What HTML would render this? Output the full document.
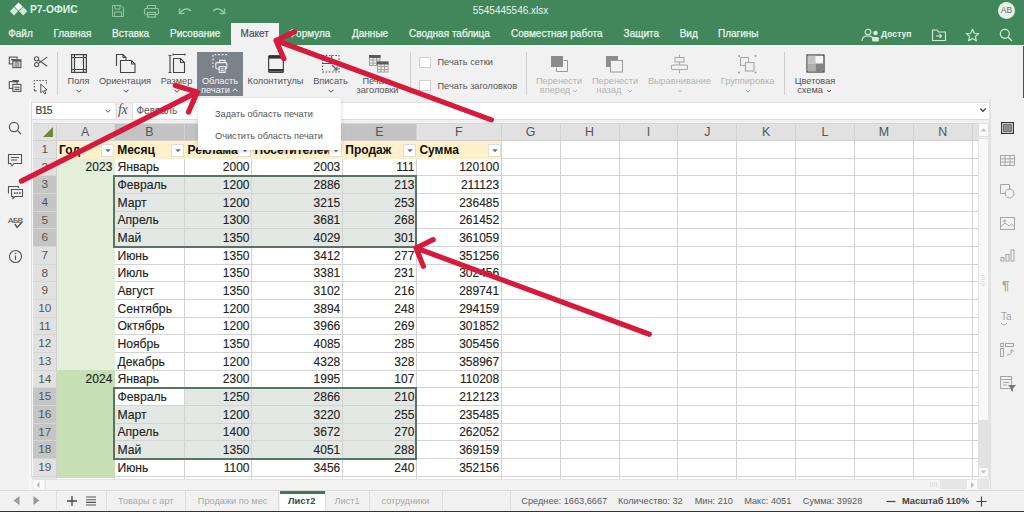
<!DOCTYPE html>
<html><head><meta charset="utf-8"><style>
html,body{margin:0;padding:0;width:1024px;height:512px;overflow:hidden;background:#f1f1f1}
body{position:relative;font-family:'Liberation Sans',sans-serif;}
div,svg{box-sizing:content-box}
</style></head><body>
<div style="position:absolute;left:0px;top:0px;width:1024px;height:45px;background:#41875b"></div><svg style="position:absolute;left:8px;top:0px;" width="22" height="18" viewBox="0 0 22 18"><g fill="#cfe9d4"><path d="M6 7.1 L10.2 11.3 L6 15.5 L1.8 11.3Z"/><path d="M15.2 7.1 L19.4 11.3 L15.2 15.5 L11 11.3Z"/></g><path d="M10.6 2.4 L14.8 6.6 L10.6 10.8 L6.4 6.6Z" fill="#f0fbf2"/></svg><div style="position:absolute;left:30px;top:-0.3000000000000007px;height:20.6px;line-height:20.6px;font-size:10.3px;color:#dff5e3;white-space:nowrap;font-weight:bold">Р7-ОФИС</div><svg style="position:absolute;left:110px;top:3px;" width="16" height="16" viewBox="0 0 16 16"><g fill="none" stroke="#8fc5a0" stroke-width="1"><path d="M2.5 2.5 H11 L13.5 5 V13.5 H2.5Z"/><path d="M5 2.5 V6 H10 V2.5"/><path d="M4.5 13.5 V9 H11.5 V13.5"/></g></svg><svg style="position:absolute;left:143px;top:3px;" width="17" height="16" viewBox="0 0 17 16"><g fill="none" stroke="#8fc5a0" stroke-width="1.2"><path d="M4.5 5.5 V2.5 H12.5 V5.5"/><rect x="1.5" y="5.5" width="14" height="6" rx="1.5"/><rect x="4.5" y="9.5" width="8" height="4.5"/></g></svg><svg style="position:absolute;left:177px;top:5px;" width="17" height="12" viewBox="0 0 17 12"><g fill="none" stroke="#8fc5a0" stroke-width="1.6"><path d="M3 8 Q8 1 14 6"/><path d="M2.5 3.5 V8.5 H7.5"/></g></svg><svg style="position:absolute;left:210px;top:5px;" width="17" height="12" viewBox="0 0 17 12"><g fill="none" stroke="#8fc5a0" stroke-width="1.6"><path d="M14 8 Q9 1 3 6"/><path d="M14.5 3.5 V8.5 H9.5"/></g></svg><div style="position:absolute;left:410.5px;width:200px;text-align:center;top:0.5px;height:20px;line-height:20px;font-size:10px;color:#eaf6ec;white-space:nowrap;">5545445546.xlsx</div><div style="position:absolute;left:998px;top:2px;width:17px;height:17px;border-radius:50%;background:#e6efe8;color:#6a6a6a;font-size:8.5px;line-height:17px;text-align:center">AB</div><div style="position:absolute;left:230.6px;top:22.8px;width:48.8px;height:22.5px;background:#f1f1f1"></div><div style="position:absolute;left:8.2px;top:23.6px;height:20px;line-height:20px;font-size:10px;color:#e8f4ea;white-space:nowrap;-webkit-text-stroke:0.25px #e8f4ea">Файл</div><div style="position:absolute;left:53.4px;top:23.6px;height:20px;line-height:20px;font-size:10px;color:#e8f4ea;white-space:nowrap;-webkit-text-stroke:0.25px #e8f4ea">Главная</div><div style="position:absolute;left:112px;top:23.6px;height:20px;line-height:20px;font-size:10px;color:#e8f4ea;white-space:nowrap;-webkit-text-stroke:0.25px #e8f4ea">Вставка</div><div style="position:absolute;left:170px;top:23.6px;height:20px;line-height:20px;font-size:10px;color:#e8f4ea;white-space:nowrap;-webkit-text-stroke:0.25px #e8f4ea">Рисование</div><div style="position:absolute;left:288.5px;top:23.6px;height:20px;line-height:20px;font-size:10px;color:#e8f4ea;white-space:nowrap;-webkit-text-stroke:0.25px #e8f4ea">Формула</div><div style="position:absolute;left:352px;top:23.6px;height:20px;line-height:20px;font-size:10px;color:#e8f4ea;white-space:nowrap;-webkit-text-stroke:0.25px #e8f4ea">Данные</div><div style="position:absolute;left:409px;top:23.6px;height:20px;line-height:20px;font-size:10px;color:#e8f4ea;white-space:nowrap;-webkit-text-stroke:0.25px #e8f4ea">Сводная таблица</div><div style="position:absolute;left:511px;top:23.6px;height:20px;line-height:20px;font-size:10px;color:#e8f4ea;white-space:nowrap;-webkit-text-stroke:0.25px #e8f4ea">Совместная работа</div><div style="position:absolute;left:623.6px;top:23.6px;height:20px;line-height:20px;font-size:10px;color:#e8f4ea;white-space:nowrap;-webkit-text-stroke:0.25px #e8f4ea">Защита</div><div style="position:absolute;left:679.7px;top:23.6px;height:20px;line-height:20px;font-size:10px;color:#e8f4ea;white-space:nowrap;-webkit-text-stroke:0.25px #e8f4ea">Вид</div><div style="position:absolute;left:718px;top:23.6px;height:20px;line-height:20px;font-size:10px;color:#e8f4ea;white-space:nowrap;-webkit-text-stroke:0.25px #e8f4ea">Плагины</div><div style="position:absolute;left:240.5px;top:23.6px;height:20px;line-height:20px;font-size:10px;color:#4a4a4a;white-space:nowrap;-webkit-text-stroke:0.15px #4a4a4a">Макет</div><svg style="position:absolute;left:861px;top:28px;" width="19" height="14" viewBox="0 0 19 14"><g fill="none" stroke="#d5ecd9" stroke-width="1.1"><circle cx="7" cy="4" r="2.8"/><path d="M1 13 Q1 8 7 8 Q11 8 12 10"/></g><circle cx="14.5" cy="5" r="2.3" fill="#d5ecd9"/><rect x="11" y="9" width="7" height="4.5" rx="1.5" fill="#d5ecd9"/></svg><div style="position:absolute;left:881px;top:26.4px;height:17.2px;line-height:17.2px;font-size:8.6px;color:#e6f4e9;white-space:nowrap;font-weight:bold">Доступ</div><svg style="position:absolute;left:931px;top:28px;" width="16" height="14" viewBox="0 0 16 14"><g fill="none" stroke="#d5ecd9" stroke-width="1.1"><path d="M1.5 2 H6 L7.5 4 H14.5 V12.5 H1.5Z"/><path d="M5 8 H10.5 M8.5 6 L10.5 8 L8.5 10"/></g></svg><svg style="position:absolute;left:965px;top:28px;" width="15" height="14" viewBox="0 0 15 14"><path d="M7.5 1.2 L9.3 5.2 L13.7 5.5 L10.4 8.4 L11.4 12.8 L7.5 10.5 L3.6 12.8 L4.6 8.4 L1.3 5.5 L5.7 5.2Z" fill="none" stroke="#d5ecd9" stroke-width="1.1" stroke-linejoin="round"/></svg><svg style="position:absolute;left:999px;top:28px;" width="14" height="14" viewBox="0 0 14 14"><g fill="none" stroke="#d5ecd9" stroke-width="1.2"><circle cx="5.8" cy="5.8" r="4.5"/><path d="M9 9 L13 13"/></g></svg><div style="position:absolute;left:0px;top:45px;width:1024px;height:53px;background:#f1f1f1"></div><div style="position:absolute;left:1023px;top:46px;width:1px;height:466px;background:#505050"></div><svg style="position:absolute;left:8px;top:55px;" width="16" height="16" viewBox="0 0 16 16"><g fill="none" stroke="#555" stroke-width="1.1"><rect x="1.3" y="2.1" width="7.8" height="6.8"/><path d="M3 4.5 H7.5"/><rect x="4.9" y="4.9" width="8" height="7.7" fill="#f1f1f1"/><path d="M6.5 7 H11.5 M6.5 9 H11.5 M6.5 11 H11.5"/></g><rect x="4.9" y="4.9" width="8" height="1.6" fill="#555"/></svg><svg style="position:absolute;left:8px;top:79px;" width="16" height="16" viewBox="0 0 16 16"><g fill="none" stroke="#555" stroke-width="1.1"><rect x="1.3" y="2.6" width="7.8" height="6.8"/><rect x="4.9" y="5.4" width="8" height="7" fill="#f1f1f1"/><path d="M6.5 8.2 H11.5 M6.5 10.4 H11.5"/></g><rect x="4" y="1" width="7" height="2.2" rx="1" fill="#555"/></svg><svg style="position:absolute;left:33px;top:55px;" width="16" height="14" viewBox="0 0 16 14"><g fill="none" stroke="#555" stroke-width="1.1"><circle cx="3.6" cy="3.8" r="2.1"/><circle cx="3.6" cy="9.6" r="2.1"/><path d="M5.4 5 L14.2 11.3 M5.4 8.4 L14.2 2.1"/></g></svg><svg style="position:absolute;left:33px;top:79px;" width="16" height="16" viewBox="0 0 16 16"><g fill="none" stroke="#555" stroke-width="1.1" stroke-dasharray="1.5 1.5"><path d="M1.3 11.5 V1.5 H13.5 V4.5"/></g><path d="M1 11.8 H3.5" stroke="#555" stroke-width="1.1"/><path d="M7.8 5 V13.8 L9.8 12 L11.6 14.9 L13 14.1 L11.3 11.3 L14 11Z" fill="#f1f1f1" stroke="#555" stroke-width="1" stroke-linejoin="round"/></svg><div style="position:absolute;left:57px;top:52px;width:1px;height:43px;background:#d0d0d0"></div><svg style="position:absolute;left:70px;top:53px;" width="18" height="21" viewBox="0 0 18 21"><g fill="none" stroke="#444" stroke-width="1.2"><rect x="1.6" y="1.6" width="14.8" height="17.8"/><path d="M4.5 1.6 V19.4 M13.5 1.6 V19.4 M1.6 4.5 H16.4 M1.6 16.5 H16.4"/></g></svg><div style="position:absolute;left:-21.5px;width:200px;text-align:center;top:72.3px;height:18.4px;line-height:18.4px;font-size:9.2px;color:#535353;white-space:nowrap;">Поля</div><svg style="position:absolute;left:75px;top:87.5px;" width="8" height="6" viewBox="0 0 8 6"><path d="M1.5 1.75 L4 4.25 L6.5 1.75" fill="none" stroke="#535353" stroke-width="1"/></svg><svg style="position:absolute;left:115px;top:53px;" width="22" height="21" viewBox="0 0 22 21"><g fill="none" stroke="#444" stroke-width="1.1"><path d="M1.5 13 V1.5 H8 L11 4.5 V7"/><path d="M8 1.5 V4.5 H11"/><path d="M5.5 7.5 H16.5 L20 11 V19.5 H5.5Z" fill="#f1f1f1"/><path d="M16.5 7.5 V11 H20"/></g></svg><div style="position:absolute;left:25px;width:200px;text-align:center;top:72.3px;height:18.4px;line-height:18.4px;font-size:9.2px;color:#535353;white-space:nowrap;">Ориентация</div><svg style="position:absolute;left:122px;top:87.5px;" width="8" height="6" viewBox="0 0 8 6"><path d="M1.5 1.75 L4 4.25 L6.5 1.75" fill="none" stroke="#535353" stroke-width="1"/></svg><svg style="position:absolute;left:168px;top:53px;" width="18" height="21" viewBox="0 0 18 21"><g fill="none" stroke="#444" stroke-width="1.1"><path d="M2 2.5 V19.5 M0.5 2.5 H3.5 M0.5 19.5 H3.5"/><path d="M5 1.5 H17 M5 0.5 V2.5 M17 0.5 V2.5"/><path d="M5.5 5.5 H12.5 L16.5 9.5 V19.5 H5.5Z"/><path d="M12.5 5.5 V9.5 H16.5"/></g></svg><div style="position:absolute;left:76.5px;width:200px;text-align:center;top:72.3px;height:18.4px;line-height:18.4px;font-size:9.2px;color:#535353;white-space:nowrap;">Размер</div><svg style="position:absolute;left:173px;top:87.5px;" width="8" height="6" viewBox="0 0 8 6"><path d="M1.5 1.75 L4 4.25 L6.5 1.75" fill="none" stroke="#535353" stroke-width="1"/></svg><div style="position:absolute;left:197px;top:52px;width:46px;height:43.5px;background:#7b8289"></div><svg style="position:absolute;left:211px;top:53px;" width="18" height="22" viewBox="0 0 18 22"><g fill="none" stroke="#eef0f2" stroke-width="1.1"><path d="M2 2 V16.5" stroke-dasharray="1.8 1.8"/><path d="M3.5 1.6 H15.5 V4" stroke-dasharray="1.8 1.8"/><path d="M8.6 9.6 V7.4 H14 V9.6"/><rect x="4.8" y="9.6" width="11" height="6.2" rx="1.2" fill="#7b8289"/><rect x="8.2" y="13.6" width="6" height="5.8" fill="#7b8289"/><path d="M9.6 15.8 H12.8 M9.6 17.6 H12.8"/></g></svg><div style="position:absolute;left:120px;width:200px;text-align:center;top:72.3px;height:18.4px;line-height:18.4px;font-size:9.2px;color:#f3f4f5;white-space:nowrap;">Область</div><div style="position:absolute;left:115.5px;width:200px;text-align:center;top:81.1px;height:18.4px;line-height:18.4px;font-size:9.2px;color:#f3f4f5;white-space:nowrap;">печати</div><svg style="position:absolute;left:231px;top:87px;" width="8" height="6" viewBox="0 0 8 6"><path d="M1.5 4.25 L4 1.75 L6.5 4.25" fill="none" stroke="#f3f4f5" stroke-width="1"/></svg><svg style="position:absolute;left:267px;top:54px;" width="18" height="20" viewBox="0 0 18 20"><g fill="none" stroke="#444" stroke-width="1.2"><rect x="1.6" y="1.6" width="14.8" height="16.8" rx="1"/></g><rect x="2" y="2" width="14" height="2.6" fill="#333"/><rect x="2" y="15" width="14" height="2.6" fill="#333"/></svg><div style="position:absolute;left:175.5px;width:200px;text-align:center;top:72.3px;height:18.4px;line-height:18.4px;font-size:9.2px;color:#535353;white-space:nowrap;">Колонтитулы</div><svg style="position:absolute;left:321px;top:54px;" width="20" height="20" viewBox="0 0 20 20"><g fill="none" stroke="#555" stroke-width="1.1"><rect x="1.5" y="1.5" width="16.5" height="16.5" stroke-dasharray="1.6 1.6"/><path d="M1.5 9.5 H10.5 V1.5"/><path d="M11 11 L16 16 M16 12.5 V16 H12.5"/></g></svg><div style="position:absolute;left:230.5px;width:200px;text-align:center;top:72.3px;height:18.4px;line-height:18.4px;font-size:9.2px;color:#535353;white-space:nowrap;">Вписать</div><svg style="position:absolute;left:326.5px;top:87.5px;" width="8" height="6" viewBox="0 0 8 6"><path d="M1.5 1.75 L4 4.25 L6.5 1.75" fill="none" stroke="#535353" stroke-width="1"/></svg><svg style="position:absolute;left:368px;top:54px;" width="22" height="20" viewBox="0 0 22 20"><g fill="none" stroke="#a0a0a0" stroke-width="1"><rect x="1.5" y="1.5" width="10.5" height="10"/><path d="M1.5 6 H12 M1.5 9 H12 M5 3.5 V11.5 M8.5 3.5 V11.5"/></g><rect x="1" y="1" width="11.5" height="3" fill="#5a5a5a"/><rect x="9" y="7.5" width="11.5" height="11" fill="#f1f1f1"/><g fill="none" stroke="#a0a0a0" stroke-width="1"><rect x="9.5" y="8" width="10.5" height="10"/><path d="M9.5 12.5 H20 M9.5 15.5 H20 M13 10 V18 M16.5 10 V18"/></g><rect x="9" y="7.5" width="11.5" height="3" fill="#5a5a5a"/></svg><div style="position:absolute;left:277.5px;width:200px;text-align:center;top:72.3px;height:18.4px;line-height:18.4px;font-size:9.2px;color:#535353;white-space:nowrap;">Печать</div><div style="position:absolute;left:277.5px;width:200px;text-align:center;top:81.3px;height:18.4px;line-height:18.4px;font-size:9.2px;color:#535353;white-space:nowrap;">заголовки</div><div style="position:absolute;left:410px;top:52px;width:1px;height:43px;background:#d0d0d0"></div><div style="position:absolute;left:419px;top:56.5px;width:11.5px;height:11px;background:#fff;border:1px solid #d0d0d0;box-sizing:border-box"></div><div style="position:absolute;left:419px;top:80px;width:11.5px;height:11px;background:#fff;border:1px solid #d0d0d0;box-sizing:border-box"></div><div style="position:absolute;left:437.5px;top:53.2px;height:18.4px;line-height:18.4px;font-size:9.2px;color:#535353;white-space:nowrap;">Печать сетки</div><div style="position:absolute;left:437.5px;top:76.7px;height:18.4px;line-height:18.4px;font-size:9.2px;color:#535353;white-space:nowrap;">Печать заголовков</div><div style="position:absolute;left:526px;top:52px;width:1px;height:43px;background:#d0d0d0"></div><svg style="position:absolute;left:550px;top:55px;" width="19" height="18" viewBox="0 0 19 18"><rect x="1" y="1" width="12" height="11" fill="#8c8c8c"/><path d="M13.5 5.5 H17.5 V16.5 H6.5 V12.5" fill="none" stroke="#9a9a9a" stroke-width="1"/></svg><div style="position:absolute;left:459px;width:200px;text-align:center;top:72.3px;height:18.4px;line-height:18.4px;font-size:9.2px;color:#b4b4b4;white-space:nowrap;">Перенести</div><div style="position:absolute;left:455px;width:200px;text-align:center;top:81.3px;height:18.4px;line-height:18.4px;font-size:9.2px;color:#b4b4b4;white-space:nowrap;">вперед</div><svg style="position:absolute;left:571px;top:87.8px;" width="8" height="6" viewBox="0 0 8 6"><path d="M2 2.0 L4 4.0 L6 2.0" fill="none" stroke="#b4b4b4" stroke-width="1"/></svg><svg style="position:absolute;left:605px;top:55px;" width="19" height="18" viewBox="0 0 19 18"><rect x="1" y="1" width="12" height="11" fill="#8c8c8c"/><rect x="5.5" y="5.5" width="12" height="11.5" fill="#f1f1f1" stroke="#9a9a9a" stroke-width="1"/></svg><div style="position:absolute;left:515px;width:200px;text-align:center;top:72.3px;height:18.4px;line-height:18.4px;font-size:9.2px;color:#b4b4b4;white-space:nowrap;">Перенести</div><div style="position:absolute;left:509px;width:200px;text-align:center;top:81.3px;height:18.4px;line-height:18.4px;font-size:9.2px;color:#b4b4b4;white-space:nowrap;">назад</div><svg style="position:absolute;left:626px;top:87.8px;" width="8" height="6" viewBox="0 0 8 6"><path d="M2 2.0 L4 4.0 L6 2.0" fill="none" stroke="#b4b4b4" stroke-width="1"/></svg><svg style="position:absolute;left:670px;top:54px;" width="19" height="20" viewBox="0 0 19 20"><g fill="none" stroke="#a8a8a8" stroke-width="1.1"><path d="M9.5 0.5 V19.5"/><rect x="5" y="3.5" width="9" height="4.5" fill="#f1f1f1"/><rect x="1.5" y="11" width="16" height="4.5" rx="1" fill="#f1f1f1"/></g></svg><div style="position:absolute;left:579.5px;width:200px;text-align:center;top:72.3px;height:18.4px;line-height:18.4px;font-size:9.2px;color:#b4b4b4;white-space:nowrap;">Выравнивание</div><svg style="position:absolute;left:676px;top:87.8px;" width="8" height="6" viewBox="0 0 8 6"><path d="M2 2.0 L4 4.0 L6 2.0" fill="none" stroke="#b4b4b4" stroke-width="1"/></svg><svg style="position:absolute;left:737px;top:54px;" width="21" height="20" viewBox="0 0 21 20"><g fill="none" stroke="#a8a8a8" stroke-width="1.1"><rect x="3.5" y="3.5" width="8" height="8"/><rect x="8.5" y="8.5" width="8.5" height="8.5" fill="#f1f1f1"/></g><g fill="#999"><circle cx="2" cy="2" r="1"/><circle cx="18.5" cy="2" r="1"/><circle cx="2" cy="18.5" r="1"/><circle cx="18.5" cy="18.5" r="1"/></g></svg><div style="position:absolute;left:647.5px;width:200px;text-align:center;top:72.3px;height:18.4px;line-height:18.4px;font-size:9.2px;color:#b4b4b4;white-space:nowrap;">Группировка</div><svg style="position:absolute;left:744px;top:87.8px;" width="8" height="6" viewBox="0 0 8 6"><path d="M2 2.0 L4 4.0 L6 2.0" fill="none" stroke="#b4b4b4" stroke-width="1"/></svg><div style="position:absolute;left:784px;top:52px;width:1px;height:43px;background:#d0d0d0"></div><svg style="position:absolute;left:806px;top:54px;" width="19" height="19" viewBox="0 0 19 19"><rect x="1" y="1" width="17" height="17" fill="#f6f6f6" stroke="#4a4a4a" stroke-width="1.3"/><rect x="1.7" y="1.7" width="7.8" height="7.8" fill="#c4c4c4"/><rect x="1.7" y="9.5" width="7.8" height="7.8" fill="#b0b0b0"/><rect x="9.5" y="9.5" width="7.8" height="7.8" fill="#858585"/></svg><div style="position:absolute;left:715px;width:200px;text-align:center;top:72.3px;height:18.4px;line-height:18.4px;font-size:9.2px;color:#535353;white-space:nowrap;">Цветовая</div><div style="position:absolute;left:710px;width:200px;text-align:center;top:81.3px;height:18.4px;line-height:18.4px;font-size:9.2px;color:#535353;white-space:nowrap;">схема</div><svg style="position:absolute;left:824.5px;top:87.8px;" width="8" height="6" viewBox="0 0 8 6"><path d="M2 2.0 L4 4.0 L6 2.0" fill="none" stroke="#535353" stroke-width="1"/></svg><div style="position:absolute;left:0px;top:98px;width:1024px;height:392px;background:#f1f1f1"></div><div style="position:absolute;left:31px;top:97px;width:960px;height:42px;background:#f0f0f0"></div><div style="position:absolute;left:31px;top:101.5px;width:958px;height:1px;background:#e2e2e2"></div><div style="position:absolute;left:31px;top:118.5px;width:958px;height:1px;background:#dcdcdc"></div><div style="position:absolute;left:31px;top:101.5px;width:1px;height:375px;background:#dadada"></div><div style="position:absolute;left:32px;top:102.5px;width:83px;height:16px;background:#fff"></div><div style="position:absolute;left:35.6px;top:101.1px;height:20.4px;line-height:20.4px;font-size:10.2px;color:#444;white-space:nowrap;letter-spacing:-0.6px;-webkit-text-stroke:0.2px #444">B15</div><svg style="position:absolute;left:103.5px;top:108px;" width="8" height="6" viewBox="0 0 8 6"><path d="M1.5 1.75 L4 4.25 L6.5 1.75" fill="none" stroke="#555" stroke-width="1"/></svg><div style="position:absolute;left:115.5px;top:102.5px;width:17.5px;height:16px;background:#f1f1f1;border-left:1px solid #dcdcdc;border-right:1px solid #dcdcdc;box-sizing:border-box"></div><div style="position:absolute;left:118px;top:101px;font-family:'Liberation Serif',serif;font-style:italic;font-size:14px;line-height:18px;color:#555;letter-spacing:-0.5px">fx</div><div style="position:absolute;left:133px;top:102.5px;width:856px;height:16px;background:#fff"></div><div style="position:absolute;left:136.5px;top:101px;height:20px;line-height:20px;font-size:10px;color:#555;white-space:nowrap;">Февраль</div><svg style="position:absolute;left:978.5px;top:106.5px;" width="8" height="6" viewBox="0 0 8 6"><path d="M1.3 1.5 L4 4.2 L6.7 1.5" fill="none" stroke="#444" stroke-width="1.4"/></svg><div style="position:absolute;left:0px;top:98px;width:29px;height:392px;background:#f1f1f1"></div><div style="position:absolute;left:28.5px;top:98px;width:2.5px;height:392px;background:#f8f8f8"></div><div style="position:absolute;left:31px;top:101.5px;width:1px;height:375px;background:#dadada"></div><svg style="position:absolute;left:7px;top:120px;" width="16" height="16" viewBox="0 0 16 16"><g fill="none" stroke="#555" stroke-width="1.2"><circle cx="7" cy="7" r="4.6"/><path d="M10.3 10.3 L14 14"/></g></svg><svg style="position:absolute;left:7px;top:152px;" width="16" height="16" viewBox="0 0 16 16"><path d="M1.5 2.5 H14.5 V11.5 H7 L5 13.8 L3.5 11.5 H1.5Z" fill="none" stroke="#555" stroke-width="1.1"/><path d="M4 5.5 H12 M4 8 H10" stroke="#555" stroke-width="1.1"/></svg><svg style="position:absolute;left:7px;top:185px;" width="17" height="15" viewBox="0 0 17 15"><path d="M1.5 8.5 V1.5 H11.5 V3" fill="none" stroke="#555" stroke-width="1.1"/><path d="M4.5 4.5 H15.5 V11.5 H8 L6 13.5 V11.5 H4.5Z" fill="#f1f1f1" stroke="#555" stroke-width="1.1"/><g fill="#555"><rect x="7" y="7.3" width="1.6" height="1.6"/><rect x="9.5" y="7.3" width="1.6" height="1.6"/><rect x="12" y="7.3" width="1.6" height="1.6"/></g></svg><div style="position:absolute;left:8px;top:215px;font-size:8px;line-height:11px;color:#555;letter-spacing:-0.4px;-webkit-text-stroke:0.2px #555">АБВ</div><svg style="position:absolute;left:13px;top:221px;" width="10" height="8" viewBox="0 0 10 8"><path d="M1.8 3 L4.2 6.4 L8.8 1.2" fill="none" stroke="#555" stroke-width="1.4"/></svg><svg style="position:absolute;left:8px;top:249px;" width="15" height="15" viewBox="0 0 15 15"><circle cx="7.5" cy="7.5" r="6" fill="none" stroke="#555" stroke-width="1.1"/><path d="M7.5 6.5 V11" stroke="#555" stroke-width="1.2"/><circle cx="7.5" cy="4.5" r="0.8" fill="#555"/></svg><div style="position:absolute;left:989px;top:98px;width:33px;height:392px;background:#f1f1f1"></div><div style="position:absolute;left:989px;top:98px;width:1.5px;height:392px;background:#e2e2e2"></div><svg style="position:absolute;left:1001px;top:122px;" width="13" height="12" viewBox="0 0 13 12"><rect x="0.6" y="0.6" width="11.8" height="10.8" fill="#f4f4f4" stroke="#333" stroke-width="1.2"/><rect x="2.6" y="2.6" width="7.8" height="6.8" fill="#8c8c8c" stroke="#555" stroke-width="0.8"/></svg><svg style="position:absolute;left:1000px;top:155px;" width="15" height="11" viewBox="0 0 15 11"><g fill="none" stroke="#a6a6a6" stroke-width="1"><rect x="0.5" y="0.5" width="14" height="10"/><path d="M0.5 3.8 H14.5 M0.5 7 H14.5 M5 0.5 V10.5 M10 0.5 V10.5"/></g></svg><svg style="position:absolute;left:1000px;top:184px;" width="15" height="15" viewBox="0 0 15 15"><g fill="none" stroke="#a6a6a6" stroke-width="1"><path d="M6 9.5 H0.5 V0.5 H9.5 V5.5"/><circle cx="9.5" cy="9.5" r="4.5"/></g></svg><svg style="position:absolute;left:1000px;top:217px;" width="15" height="13" viewBox="0 0 15 13"><g fill="none" stroke="#a6a6a6" stroke-width="1"><rect x="0.5" y="0.5" width="14" height="12"/><path d="M0.5 10 L5 6 L9 9 L11.5 7 L14.5 9.5"/></g><circle cx="4.5" cy="4" r="1.2" fill="#a6a6a6"/></svg><svg style="position:absolute;left:1000px;top:249px;" width="15" height="13" viewBox="0 0 15 13"><g fill="none" stroke="#a6a6a6" stroke-width="1"><rect x="1" y="8.5" width="3" height="3.5"/><rect x="6" y="5.5" width="3" height="6.5"/><rect x="11" y="1" width="3" height="11"/></g></svg><div style="position:absolute;left:1002px;top:279px;font-size:13px;font-weight:bold;color:#a6a6a6;line-height:14px">¶</div><div style="position:absolute;left:1001px;top:311px;font-size:10px;color:#a6a6a6;line-height:11px">Ta</div><svg style="position:absolute;left:1000px;top:322px;" width="15" height="6" viewBox="0 0 15 6"><path d="M1 1 Q4 5 7 1" fill="none" stroke="#a6a6a6" stroke-width="1"/></svg><svg style="position:absolute;left:1000px;top:343px;" width="15" height="14" viewBox="0 0 15 14"><g fill="none" stroke="#a6a6a6" stroke-width="1"><rect x="0.5" y="0.5" width="3" height="3"/><rect x="5.5" y="0.5" width="8" height="3"/><rect x="0.5" y="5.5" width="3" height="8"/><path d="M7 12 Q12 12 12 7 M10.5 8.5 L12 6.5 L13.5 8.5"/></g></svg><svg style="position:absolute;left:1000px;top:376px;" width="17" height="16" viewBox="0 0 17 16"><g fill="none" stroke="#a6a6a6" stroke-width="1"><rect x="0.5" y="0.5" width="11" height="12"/><path d="M0.5 3.5 H11.5 M3 6.5 H9 M3 9 H7"/></g><path d="M8 9 H16 L13 12.5 V15.5 L11 14.5 V12.5Z" fill="#777"/></svg><div style="position:absolute;left:56px;top:140.5px;width:922px;height:338.0px;background:#fff"></div><div style="position:absolute;left:31.5px;top:123px;width:946.5px;height:17.5px;background:#e1e1e1"></div><div style="position:absolute;left:-14.849999999999994px;width:200px;text-align:center;top:119.6px;height:24.8px;line-height:24.8px;font-size:12.4px;color:#555;white-space:nowrap;">A</div><div style="position:absolute;left:114.3px;top:123px;width:70.2px;height:17.5px;background:#c3c3c3"></div><div style="position:absolute;left:49.400000000000006px;width:200px;text-align:center;top:119.6px;height:24.8px;line-height:24.8px;font-size:12.4px;color:#555;white-space:nowrap;">B</div><div style="position:absolute;left:184.5px;top:123px;width:67.0px;height:17.5px;background:#c3c3c3"></div><div style="position:absolute;left:118.0px;width:200px;text-align:center;top:119.6px;height:24.8px;line-height:24.8px;font-size:12.4px;color:#555;white-space:nowrap;">C</div><div style="position:absolute;left:251.5px;top:123px;width:90.80000000000001px;height:17.5px;background:#c3c3c3"></div><div style="position:absolute;left:196.89999999999998px;width:200px;text-align:center;top:119.6px;height:24.8px;line-height:24.8px;font-size:12.4px;color:#555;white-space:nowrap;">D</div><div style="position:absolute;left:342.3px;top:123px;width:74.09999999999997px;height:17.5px;background:#c3c3c3"></div><div style="position:absolute;left:279.35px;width:200px;text-align:center;top:119.6px;height:24.8px;line-height:24.8px;font-size:12.4px;color:#555;white-space:nowrap;">E</div><div style="position:absolute;left:358.79999999999995px;width:200px;text-align:center;top:119.6px;height:24.8px;line-height:24.8px;font-size:12.4px;color:#555;white-space:nowrap;">F</div><div style="position:absolute;left:430.65px;width:200px;text-align:center;top:119.6px;height:24.8px;line-height:24.8px;font-size:12.4px;color:#555;white-space:nowrap;">G</div><div style="position:absolute;left:489.54999999999995px;width:200px;text-align:center;top:119.6px;height:24.8px;line-height:24.8px;font-size:12.4px;color:#555;white-space:nowrap;">H</div><div style="position:absolute;left:548.45px;width:200px;text-align:center;top:119.6px;height:24.8px;line-height:24.8px;font-size:12.4px;color:#555;white-space:nowrap;">I</div><div style="position:absolute;left:607.25px;width:200px;text-align:center;top:119.6px;height:24.8px;line-height:24.8px;font-size:12.4px;color:#555;white-space:nowrap;">J</div><div style="position:absolute;left:666.1px;width:200px;text-align:center;top:119.6px;height:24.8px;line-height:24.8px;font-size:12.4px;color:#555;white-space:nowrap;">K</div><div style="position:absolute;left:725.05px;width:200px;text-align:center;top:119.6px;height:24.8px;line-height:24.8px;font-size:12.4px;color:#555;white-space:nowrap;">L</div><div style="position:absolute;left:783.95px;width:200px;text-align:center;top:119.6px;height:24.8px;line-height:24.8px;font-size:12.4px;color:#555;white-space:nowrap;">M</div><div style="position:absolute;left:842.8499999999999px;width:200px;text-align:center;top:119.6px;height:24.8px;line-height:24.8px;font-size:12.4px;color:#555;white-space:nowrap;">N</div><div style="position:absolute;left:31.5px;top:123px;width:24.5px;height:17.5px;background:#e1e1e1"></div><svg style="position:absolute;left:42px;top:126px;" width="12" height="12" viewBox="0 0 12 12"><path d="M11 1 V11 H1Z" fill="#6d8a3b"/></svg><div style="position:absolute;left:31.5px;top:140.5px;width:24.5px;height:338.0px;background:#e1e1e1"></div><div style="position:absolute;left:-55.2px;width:200px;text-align:center;top:138.03px;height:23.6px;line-height:23.6px;font-size:11.8px;color:#555;white-space:nowrap;">1</div><div style="position:absolute;left:-55.2px;width:200px;text-align:center;top:155.69px;height:23.6px;line-height:23.6px;font-size:11.8px;color:#555;white-space:nowrap;">2</div><div style="position:absolute;left:31.5px;top:175.82px;width:24.5px;height:17.66px;background:#c5c5c5"></div><div style="position:absolute;left:-55.2px;width:200px;text-align:center;top:173.35px;height:23.6px;line-height:23.6px;font-size:11.8px;color:#555;white-space:nowrap;">3</div><div style="position:absolute;left:31.5px;top:193.48000000000002px;width:24.5px;height:17.66px;background:#c5c5c5"></div><div style="position:absolute;left:-55.2px;width:200px;text-align:center;top:191.01000000000002px;height:23.6px;line-height:23.6px;font-size:11.8px;color:#555;white-space:nowrap;">4</div><div style="position:absolute;left:31.5px;top:211.14px;width:24.5px;height:17.66px;background:#c5c5c5"></div><div style="position:absolute;left:-55.2px;width:200px;text-align:center;top:208.67px;height:23.6px;line-height:23.6px;font-size:11.8px;color:#555;white-space:nowrap;">5</div><div style="position:absolute;left:31.5px;top:228.8px;width:24.5px;height:17.66px;background:#c5c5c5"></div><div style="position:absolute;left:-55.2px;width:200px;text-align:center;top:226.33px;height:23.6px;line-height:23.6px;font-size:11.8px;color:#555;white-space:nowrap;">6</div><div style="position:absolute;left:-55.2px;width:200px;text-align:center;top:243.99px;height:23.6px;line-height:23.6px;font-size:11.8px;color:#555;white-space:nowrap;">7</div><div style="position:absolute;left:-55.2px;width:200px;text-align:center;top:261.65px;height:23.6px;line-height:23.6px;font-size:11.8px;color:#555;white-space:nowrap;">8</div><div style="position:absolute;left:-55.2px;width:200px;text-align:center;top:279.30999999999995px;height:23.6px;line-height:23.6px;font-size:11.8px;color:#555;white-space:nowrap;">9</div><div style="position:absolute;left:-55.2px;width:200px;text-align:center;top:296.96999999999997px;height:23.6px;line-height:23.6px;font-size:11.8px;color:#555;white-space:nowrap;">10</div><div style="position:absolute;left:-55.2px;width:200px;text-align:center;top:314.63px;height:23.6px;line-height:23.6px;font-size:11.8px;color:#555;white-space:nowrap;">11</div><div style="position:absolute;left:-55.2px;width:200px;text-align:center;top:332.28999999999996px;height:23.6px;line-height:23.6px;font-size:11.8px;color:#555;white-space:nowrap;">12</div><div style="position:absolute;left:-55.2px;width:200px;text-align:center;top:349.95px;height:23.6px;line-height:23.6px;font-size:11.8px;color:#555;white-space:nowrap;">13</div><div style="position:absolute;left:-55.2px;width:200px;text-align:center;top:367.61px;height:23.6px;line-height:23.6px;font-size:11.8px;color:#555;white-space:nowrap;">14</div><div style="position:absolute;left:31.5px;top:387.74px;width:24.5px;height:17.66px;background:#c5c5c5"></div><div style="position:absolute;left:-55.2px;width:200px;text-align:center;top:385.27px;height:23.6px;line-height:23.6px;font-size:11.8px;color:#555;white-space:nowrap;">15</div><div style="position:absolute;left:31.5px;top:405.4px;width:24.5px;height:17.66px;background:#c5c5c5"></div><div style="position:absolute;left:-55.2px;width:200px;text-align:center;top:402.92999999999995px;height:23.6px;line-height:23.6px;font-size:11.8px;color:#555;white-space:nowrap;">16</div><div style="position:absolute;left:31.5px;top:423.06px;width:24.5px;height:17.66px;background:#c5c5c5"></div><div style="position:absolute;left:-55.2px;width:200px;text-align:center;top:420.59px;height:23.6px;line-height:23.6px;font-size:11.8px;color:#555;white-space:nowrap;">17</div><div style="position:absolute;left:31.5px;top:440.72px;width:24.5px;height:17.66px;background:#c5c5c5"></div><div style="position:absolute;left:-55.2px;width:200px;text-align:center;top:438.25px;height:23.6px;line-height:23.6px;font-size:11.8px;color:#555;white-space:nowrap;">18</div><div style="position:absolute;left:-55.2px;width:200px;text-align:center;top:455.90999999999997px;height:23.6px;line-height:23.6px;font-size:11.8px;color:#555;white-space:nowrap;">19</div><div style="position:absolute;left:114.3px;top:175.82px;width:302.09999999999997px;height:70.64px;background:#e3e8e4"></div><div style="position:absolute;left:114.3px;top:387.74px;width:302.09999999999997px;height:70.64px;background:#e3e8e4"></div><div style="position:absolute;left:114.3px;top:387.74px;width:70.2px;height:17.66px;background:#fff"></div><div style="position:absolute;left:56px;top:157.66px;width:922px;height:1px;background:#d3d3d3"></div><div style="position:absolute;left:56px;top:175.32px;width:922px;height:1px;background:#d3d3d3"></div><div style="position:absolute;left:56px;top:192.98px;width:922px;height:1px;background:#d3d3d3"></div><div style="position:absolute;left:56px;top:210.64000000000001px;width:922px;height:1px;background:#d3d3d3"></div><div style="position:absolute;left:56px;top:228.29999999999998px;width:922px;height:1px;background:#d3d3d3"></div><div style="position:absolute;left:56px;top:245.96px;width:922px;height:1px;background:#d3d3d3"></div><div style="position:absolute;left:56px;top:263.62px;width:922px;height:1px;background:#d3d3d3"></div><div style="position:absolute;left:56px;top:281.28000000000003px;width:922px;height:1px;background:#d3d3d3"></div><div style="position:absolute;left:56px;top:298.94px;width:922px;height:1px;background:#d3d3d3"></div><div style="position:absolute;left:56px;top:316.6px;width:922px;height:1px;background:#d3d3d3"></div><div style="position:absolute;left:56px;top:334.26000000000005px;width:922px;height:1px;background:#d3d3d3"></div><div style="position:absolute;left:56px;top:351.92px;width:922px;height:1px;background:#d3d3d3"></div><div style="position:absolute;left:56px;top:369.58000000000004px;width:922px;height:1px;background:#d3d3d3"></div><div style="position:absolute;left:56px;top:387.24000000000007px;width:922px;height:1px;background:#d3d3d3"></div><div style="position:absolute;left:56px;top:404.90000000000003px;width:922px;height:1px;background:#d3d3d3"></div><div style="position:absolute;left:56px;top:422.56px;width:922px;height:1px;background:#d3d3d3"></div><div style="position:absolute;left:56px;top:440.22px;width:922px;height:1px;background:#d3d3d3"></div><div style="position:absolute;left:56px;top:457.88000000000005px;width:922px;height:1px;background:#d3d3d3"></div><div style="position:absolute;left:56px;top:475.54px;width:922px;height:1px;background:#d3d3d3"></div><div style="position:absolute;left:113.8px;top:140.5px;width:1px;height:338.0px;background:#d3d3d3"></div><div style="position:absolute;left:184.0px;top:140.5px;width:1px;height:338.0px;background:#d3d3d3"></div><div style="position:absolute;left:251.0px;top:140.5px;width:1px;height:338.0px;background:#d3d3d3"></div><div style="position:absolute;left:341.8px;top:140.5px;width:1px;height:338.0px;background:#d3d3d3"></div><div style="position:absolute;left:415.9px;top:140.5px;width:1px;height:338.0px;background:#d3d3d3"></div><div style="position:absolute;left:500.7px;top:140.5px;width:1px;height:338.0px;background:#d3d3d3"></div><div style="position:absolute;left:559.6px;top:140.5px;width:1px;height:338.0px;background:#d3d3d3"></div><div style="position:absolute;left:618.5px;top:140.5px;width:1px;height:338.0px;background:#d3d3d3"></div><div style="position:absolute;left:677.4px;top:140.5px;width:1px;height:338.0px;background:#d3d3d3"></div><div style="position:absolute;left:736.1px;top:140.5px;width:1px;height:338.0px;background:#d3d3d3"></div><div style="position:absolute;left:795.1px;top:140.5px;width:1px;height:338.0px;background:#d3d3d3"></div><div style="position:absolute;left:854.0px;top:140.5px;width:1px;height:338.0px;background:#d3d3d3"></div><div style="position:absolute;left:912.9px;top:140.5px;width:1px;height:338.0px;background:#d3d3d3"></div><div style="position:absolute;left:971.8px;top:140.5px;width:1px;height:338.0px;background:#d3d3d3"></div><div style="position:absolute;left:56px;top:140.5px;width:445.2px;height:18.16px;background:#fdf0ca"></div><div style="position:absolute;left:56px;top:158.66px;width:58.8px;height:211.42000000000002px;background:#e2efda"></div><div style="position:absolute;left:56px;top:370.08000000000004px;width:58.8px;height:108.41999999999996px;background:#c6e0b4"></div><div style="position:absolute;left:113.8px;top:123px;width:1px;height:17.5px;background:#d2d2d2"></div><div style="position:absolute;left:184.0px;top:123px;width:1px;height:17.5px;background:#d2d2d2"></div><div style="position:absolute;left:251.0px;top:123px;width:1px;height:17.5px;background:#d2d2d2"></div><div style="position:absolute;left:341.8px;top:123px;width:1px;height:17.5px;background:#d2d2d2"></div><div style="position:absolute;left:415.9px;top:123px;width:1px;height:17.5px;background:#d2d2d2"></div><div style="position:absolute;left:500.7px;top:123px;width:1px;height:17.5px;background:#d2d2d2"></div><div style="position:absolute;left:559.6px;top:123px;width:1px;height:17.5px;background:#d2d2d2"></div><div style="position:absolute;left:618.5px;top:123px;width:1px;height:17.5px;background:#d2d2d2"></div><div style="position:absolute;left:677.4px;top:123px;width:1px;height:17.5px;background:#d2d2d2"></div><div style="position:absolute;left:736.1px;top:123px;width:1px;height:17.5px;background:#d2d2d2"></div><div style="position:absolute;left:795.1px;top:123px;width:1px;height:17.5px;background:#d2d2d2"></div><div style="position:absolute;left:854.0px;top:123px;width:1px;height:17.5px;background:#d2d2d2"></div><div style="position:absolute;left:912.9px;top:123px;width:1px;height:17.5px;background:#d2d2d2"></div><div style="position:absolute;left:971.8px;top:123px;width:1px;height:17.5px;background:#d2d2d2"></div><div style="position:absolute;left:31.5px;top:122.5px;width:946.5px;height:1px;background:#d8d8d8"></div><div style="position:absolute;left:31.5px;top:140px;width:946.5px;height:1px;background:#d0d0d0"></div><div style="position:absolute;left:55.5px;top:123px;width:1px;height:355.5px;background:#d0d0d0"></div><div style="position:absolute;left:31.5px;top:157.66px;width:24.5px;height:1px;background:#d6d6d6"></div><div style="position:absolute;left:31.5px;top:175.32px;width:24.5px;height:1px;background:#d6d6d6"></div><div style="position:absolute;left:31.5px;top:192.98px;width:24.5px;height:1px;background:#d6d6d6"></div><div style="position:absolute;left:31.5px;top:210.64000000000001px;width:24.5px;height:1px;background:#d6d6d6"></div><div style="position:absolute;left:31.5px;top:228.29999999999998px;width:24.5px;height:1px;background:#d6d6d6"></div><div style="position:absolute;left:31.5px;top:245.96px;width:24.5px;height:1px;background:#d6d6d6"></div><div style="position:absolute;left:31.5px;top:263.62px;width:24.5px;height:1px;background:#d6d6d6"></div><div style="position:absolute;left:31.5px;top:281.28000000000003px;width:24.5px;height:1px;background:#d6d6d6"></div><div style="position:absolute;left:31.5px;top:298.94px;width:24.5px;height:1px;background:#d6d6d6"></div><div style="position:absolute;left:31.5px;top:316.6px;width:24.5px;height:1px;background:#d6d6d6"></div><div style="position:absolute;left:31.5px;top:334.26000000000005px;width:24.5px;height:1px;background:#d6d6d6"></div><div style="position:absolute;left:31.5px;top:351.92px;width:24.5px;height:1px;background:#d6d6d6"></div><div style="position:absolute;left:31.5px;top:369.58000000000004px;width:24.5px;height:1px;background:#d6d6d6"></div><div style="position:absolute;left:31.5px;top:387.24000000000007px;width:24.5px;height:1px;background:#d6d6d6"></div><div style="position:absolute;left:31.5px;top:404.90000000000003px;width:24.5px;height:1px;background:#d6d6d6"></div><div style="position:absolute;left:31.5px;top:422.56px;width:24.5px;height:1px;background:#d6d6d6"></div><div style="position:absolute;left:31.5px;top:440.22px;width:24.5px;height:1px;background:#d6d6d6"></div><div style="position:absolute;left:31.5px;top:457.88000000000005px;width:24.5px;height:1px;background:#d6d6d6"></div><div style="position:absolute;left:31.5px;top:475.54px;width:24.5px;height:1px;background:#d6d6d6"></div><div style="position:absolute;left:31.5px;top:123px;width:1px;height:353px;background:#f8f8f8"></div><div style="position:absolute;left:-187.7px;width:300px;text-align:right;top:155.49px;height:24px;line-height:24px;font-size:12px;color:#222;-webkit-text-stroke:0.12px #222;white-space:nowrap;">2023</div><div style="position:absolute;left:117.4px;top:155.29000000000002px;height:24.4px;line-height:24.4px;font-size:12.2px;color:#222;-webkit-text-stroke:0.12px #222;white-space:nowrap;">Январь</div><div style="position:absolute;left:-50.5px;width:300px;text-align:right;top:155.49px;height:24px;line-height:24px;font-size:12px;color:#222;-webkit-text-stroke:0.12px #222;white-space:nowrap;">2000</div><div style="position:absolute;left:40.30000000000001px;width:300px;text-align:right;top:155.49px;height:24px;line-height:24px;font-size:12px;color:#222;-webkit-text-stroke:0.12px #222;white-space:nowrap;">2003</div><div style="position:absolute;left:114.39999999999998px;width:300px;text-align:right;top:155.49px;height:24px;line-height:24px;font-size:12px;color:#222;-webkit-text-stroke:0.12px #222;white-space:nowrap;">111</div><div style="position:absolute;left:199.2px;width:300px;text-align:right;top:155.49px;height:24px;line-height:24px;font-size:12px;color:#222;-webkit-text-stroke:0.12px #222;white-space:nowrap;">120100</div><div style="position:absolute;left:117.4px;top:172.95000000000002px;height:24.4px;line-height:24.4px;font-size:12.2px;color:#222;-webkit-text-stroke:0.12px #222;white-space:nowrap;">Февраль</div><div style="position:absolute;left:-50.5px;width:300px;text-align:right;top:173.15px;height:24px;line-height:24px;font-size:12px;color:#222;-webkit-text-stroke:0.12px #222;white-space:nowrap;">1200</div><div style="position:absolute;left:40.30000000000001px;width:300px;text-align:right;top:173.15px;height:24px;line-height:24px;font-size:12px;color:#222;-webkit-text-stroke:0.12px #222;white-space:nowrap;">2886</div><div style="position:absolute;left:114.39999999999998px;width:300px;text-align:right;top:173.15px;height:24px;line-height:24px;font-size:12px;color:#222;-webkit-text-stroke:0.12px #222;white-space:nowrap;">213</div><div style="position:absolute;left:199.2px;width:300px;text-align:right;top:173.15px;height:24px;line-height:24px;font-size:12px;color:#222;-webkit-text-stroke:0.12px #222;white-space:nowrap;">211123</div><div style="position:absolute;left:117.4px;top:190.61000000000004px;height:24.4px;line-height:24.4px;font-size:12.2px;color:#222;-webkit-text-stroke:0.12px #222;white-space:nowrap;">Март</div><div style="position:absolute;left:-50.5px;width:300px;text-align:right;top:190.81000000000003px;height:24px;line-height:24px;font-size:12px;color:#222;-webkit-text-stroke:0.12px #222;white-space:nowrap;">1200</div><div style="position:absolute;left:40.30000000000001px;width:300px;text-align:right;top:190.81000000000003px;height:24px;line-height:24px;font-size:12px;color:#222;-webkit-text-stroke:0.12px #222;white-space:nowrap;">3215</div><div style="position:absolute;left:114.39999999999998px;width:300px;text-align:right;top:190.81000000000003px;height:24px;line-height:24px;font-size:12px;color:#222;-webkit-text-stroke:0.12px #222;white-space:nowrap;">253</div><div style="position:absolute;left:199.2px;width:300px;text-align:right;top:190.81000000000003px;height:24px;line-height:24px;font-size:12px;color:#222;-webkit-text-stroke:0.12px #222;white-space:nowrap;">236485</div><div style="position:absolute;left:117.4px;top:208.27px;height:24.4px;line-height:24.4px;font-size:12.2px;color:#222;-webkit-text-stroke:0.12px #222;white-space:nowrap;">Апрель</div><div style="position:absolute;left:-50.5px;width:300px;text-align:right;top:208.47px;height:24px;line-height:24px;font-size:12px;color:#222;-webkit-text-stroke:0.12px #222;white-space:nowrap;">1300</div><div style="position:absolute;left:40.30000000000001px;width:300px;text-align:right;top:208.47px;height:24px;line-height:24px;font-size:12px;color:#222;-webkit-text-stroke:0.12px #222;white-space:nowrap;">3681</div><div style="position:absolute;left:114.39999999999998px;width:300px;text-align:right;top:208.47px;height:24px;line-height:24px;font-size:12px;color:#222;-webkit-text-stroke:0.12px #222;white-space:nowrap;">268</div><div style="position:absolute;left:199.2px;width:300px;text-align:right;top:208.47px;height:24px;line-height:24px;font-size:12px;color:#222;-webkit-text-stroke:0.12px #222;white-space:nowrap;">261452</div><div style="position:absolute;left:117.4px;top:225.93000000000004px;height:24.4px;line-height:24.4px;font-size:12.2px;color:#222;-webkit-text-stroke:0.12px #222;white-space:nowrap;">Май</div><div style="position:absolute;left:-50.5px;width:300px;text-align:right;top:226.13000000000002px;height:24px;line-height:24px;font-size:12px;color:#222;-webkit-text-stroke:0.12px #222;white-space:nowrap;">1350</div><div style="position:absolute;left:40.30000000000001px;width:300px;text-align:right;top:226.13000000000002px;height:24px;line-height:24px;font-size:12px;color:#222;-webkit-text-stroke:0.12px #222;white-space:nowrap;">4029</div><div style="position:absolute;left:114.39999999999998px;width:300px;text-align:right;top:226.13000000000002px;height:24px;line-height:24px;font-size:12px;color:#222;-webkit-text-stroke:0.12px #222;white-space:nowrap;">301</div><div style="position:absolute;left:199.2px;width:300px;text-align:right;top:226.13000000000002px;height:24px;line-height:24px;font-size:12px;color:#222;-webkit-text-stroke:0.12px #222;white-space:nowrap;">361059</div><div style="position:absolute;left:117.4px;top:243.59000000000003px;height:24.4px;line-height:24.4px;font-size:12.2px;color:#222;-webkit-text-stroke:0.12px #222;white-space:nowrap;">Июнь</div><div style="position:absolute;left:-50.5px;width:300px;text-align:right;top:243.79000000000002px;height:24px;line-height:24px;font-size:12px;color:#222;-webkit-text-stroke:0.12px #222;white-space:nowrap;">1350</div><div style="position:absolute;left:40.30000000000001px;width:300px;text-align:right;top:243.79000000000002px;height:24px;line-height:24px;font-size:12px;color:#222;-webkit-text-stroke:0.12px #222;white-space:nowrap;">3412</div><div style="position:absolute;left:114.39999999999998px;width:300px;text-align:right;top:243.79000000000002px;height:24px;line-height:24px;font-size:12px;color:#222;-webkit-text-stroke:0.12px #222;white-space:nowrap;">277</div><div style="position:absolute;left:199.2px;width:300px;text-align:right;top:243.79000000000002px;height:24px;line-height:24px;font-size:12px;color:#222;-webkit-text-stroke:0.12px #222;white-space:nowrap;">351256</div><div style="position:absolute;left:117.4px;top:261.25px;height:24.4px;line-height:24.4px;font-size:12.2px;color:#222;-webkit-text-stroke:0.12px #222;white-space:nowrap;">Июль</div><div style="position:absolute;left:-50.5px;width:300px;text-align:right;top:261.45px;height:24px;line-height:24px;font-size:12px;color:#222;-webkit-text-stroke:0.12px #222;white-space:nowrap;">1350</div><div style="position:absolute;left:40.30000000000001px;width:300px;text-align:right;top:261.45px;height:24px;line-height:24px;font-size:12px;color:#222;-webkit-text-stroke:0.12px #222;white-space:nowrap;">3381</div><div style="position:absolute;left:114.39999999999998px;width:300px;text-align:right;top:261.45px;height:24px;line-height:24px;font-size:12px;color:#222;-webkit-text-stroke:0.12px #222;white-space:nowrap;">231</div><div style="position:absolute;left:199.2px;width:300px;text-align:right;top:261.45px;height:24px;line-height:24px;font-size:12px;color:#222;-webkit-text-stroke:0.12px #222;white-space:nowrap;">302456</div><div style="position:absolute;left:117.4px;top:278.90999999999997px;height:24.4px;line-height:24.4px;font-size:12.2px;color:#222;-webkit-text-stroke:0.12px #222;white-space:nowrap;">Август</div><div style="position:absolute;left:-50.5px;width:300px;text-align:right;top:279.10999999999996px;height:24px;line-height:24px;font-size:12px;color:#222;-webkit-text-stroke:0.12px #222;white-space:nowrap;">1350</div><div style="position:absolute;left:40.30000000000001px;width:300px;text-align:right;top:279.10999999999996px;height:24px;line-height:24px;font-size:12px;color:#222;-webkit-text-stroke:0.12px #222;white-space:nowrap;">3102</div><div style="position:absolute;left:114.39999999999998px;width:300px;text-align:right;top:279.10999999999996px;height:24px;line-height:24px;font-size:12px;color:#222;-webkit-text-stroke:0.12px #222;white-space:nowrap;">216</div><div style="position:absolute;left:199.2px;width:300px;text-align:right;top:279.10999999999996px;height:24px;line-height:24px;font-size:12px;color:#222;-webkit-text-stroke:0.12px #222;white-space:nowrap;">289741</div><div style="position:absolute;left:117.4px;top:296.57px;height:24.4px;line-height:24.4px;font-size:12.2px;color:#222;-webkit-text-stroke:0.12px #222;white-space:nowrap;">Сентябрь</div><div style="position:absolute;left:-50.5px;width:300px;text-align:right;top:296.77px;height:24px;line-height:24px;font-size:12px;color:#222;-webkit-text-stroke:0.12px #222;white-space:nowrap;">1200</div><div style="position:absolute;left:40.30000000000001px;width:300px;text-align:right;top:296.77px;height:24px;line-height:24px;font-size:12px;color:#222;-webkit-text-stroke:0.12px #222;white-space:nowrap;">3894</div><div style="position:absolute;left:114.39999999999998px;width:300px;text-align:right;top:296.77px;height:24px;line-height:24px;font-size:12px;color:#222;-webkit-text-stroke:0.12px #222;white-space:nowrap;">248</div><div style="position:absolute;left:199.2px;width:300px;text-align:right;top:296.77px;height:24px;line-height:24px;font-size:12px;color:#222;-webkit-text-stroke:0.12px #222;white-space:nowrap;">294159</div><div style="position:absolute;left:117.4px;top:314.23px;height:24.4px;line-height:24.4px;font-size:12.2px;color:#222;-webkit-text-stroke:0.12px #222;white-space:nowrap;">Октябрь</div><div style="position:absolute;left:-50.5px;width:300px;text-align:right;top:314.43px;height:24px;line-height:24px;font-size:12px;color:#222;-webkit-text-stroke:0.12px #222;white-space:nowrap;">1200</div><div style="position:absolute;left:40.30000000000001px;width:300px;text-align:right;top:314.43px;height:24px;line-height:24px;font-size:12px;color:#222;-webkit-text-stroke:0.12px #222;white-space:nowrap;">3966</div><div style="position:absolute;left:114.39999999999998px;width:300px;text-align:right;top:314.43px;height:24px;line-height:24px;font-size:12px;color:#222;-webkit-text-stroke:0.12px #222;white-space:nowrap;">269</div><div style="position:absolute;left:199.2px;width:300px;text-align:right;top:314.43px;height:24px;line-height:24px;font-size:12px;color:#222;-webkit-text-stroke:0.12px #222;white-space:nowrap;">301852</div><div style="position:absolute;left:117.4px;top:331.89px;height:24.4px;line-height:24.4px;font-size:12.2px;color:#222;-webkit-text-stroke:0.12px #222;white-space:nowrap;">Ноябрь</div><div style="position:absolute;left:-50.5px;width:300px;text-align:right;top:332.09px;height:24px;line-height:24px;font-size:12px;color:#222;-webkit-text-stroke:0.12px #222;white-space:nowrap;">1350</div><div style="position:absolute;left:40.30000000000001px;width:300px;text-align:right;top:332.09px;height:24px;line-height:24px;font-size:12px;color:#222;-webkit-text-stroke:0.12px #222;white-space:nowrap;">4085</div><div style="position:absolute;left:114.39999999999998px;width:300px;text-align:right;top:332.09px;height:24px;line-height:24px;font-size:12px;color:#222;-webkit-text-stroke:0.12px #222;white-space:nowrap;">285</div><div style="position:absolute;left:199.2px;width:300px;text-align:right;top:332.09px;height:24px;line-height:24px;font-size:12px;color:#222;-webkit-text-stroke:0.12px #222;white-space:nowrap;">305456</div><div style="position:absolute;left:117.4px;top:349.55px;height:24.4px;line-height:24.4px;font-size:12.2px;color:#222;-webkit-text-stroke:0.12px #222;white-space:nowrap;">Декабрь</div><div style="position:absolute;left:-50.5px;width:300px;text-align:right;top:349.75px;height:24px;line-height:24px;font-size:12px;color:#222;-webkit-text-stroke:0.12px #222;white-space:nowrap;">1200</div><div style="position:absolute;left:40.30000000000001px;width:300px;text-align:right;top:349.75px;height:24px;line-height:24px;font-size:12px;color:#222;-webkit-text-stroke:0.12px #222;white-space:nowrap;">4328</div><div style="position:absolute;left:114.39999999999998px;width:300px;text-align:right;top:349.75px;height:24px;line-height:24px;font-size:12px;color:#222;-webkit-text-stroke:0.12px #222;white-space:nowrap;">328</div><div style="position:absolute;left:199.2px;width:300px;text-align:right;top:349.75px;height:24px;line-height:24px;font-size:12px;color:#222;-webkit-text-stroke:0.12px #222;white-space:nowrap;">358967</div><div style="position:absolute;left:-187.7px;width:300px;text-align:right;top:367.41px;height:24px;line-height:24px;font-size:12px;color:#222;-webkit-text-stroke:0.12px #222;white-space:nowrap;">2024</div><div style="position:absolute;left:117.4px;top:367.21000000000004px;height:24.4px;line-height:24.4px;font-size:12.2px;color:#222;-webkit-text-stroke:0.12px #222;white-space:nowrap;">Январь</div><div style="position:absolute;left:-50.5px;width:300px;text-align:right;top:367.41px;height:24px;line-height:24px;font-size:12px;color:#222;-webkit-text-stroke:0.12px #222;white-space:nowrap;">2300</div><div style="position:absolute;left:40.30000000000001px;width:300px;text-align:right;top:367.41px;height:24px;line-height:24px;font-size:12px;color:#222;-webkit-text-stroke:0.12px #222;white-space:nowrap;">1995</div><div style="position:absolute;left:114.39999999999998px;width:300px;text-align:right;top:367.41px;height:24px;line-height:24px;font-size:12px;color:#222;-webkit-text-stroke:0.12px #222;white-space:nowrap;">107</div><div style="position:absolute;left:199.2px;width:300px;text-align:right;top:367.41px;height:24px;line-height:24px;font-size:12px;color:#222;-webkit-text-stroke:0.12px #222;white-space:nowrap;">110208</div><div style="position:absolute;left:117.4px;top:384.87px;height:24.4px;line-height:24.4px;font-size:12.2px;color:#222;-webkit-text-stroke:0.12px #222;white-space:nowrap;">Февраль</div><div style="position:absolute;left:-50.5px;width:300px;text-align:right;top:385.07px;height:24px;line-height:24px;font-size:12px;color:#222;-webkit-text-stroke:0.12px #222;white-space:nowrap;">1250</div><div style="position:absolute;left:40.30000000000001px;width:300px;text-align:right;top:385.07px;height:24px;line-height:24px;font-size:12px;color:#222;-webkit-text-stroke:0.12px #222;white-space:nowrap;">2866</div><div style="position:absolute;left:114.39999999999998px;width:300px;text-align:right;top:385.07px;height:24px;line-height:24px;font-size:12px;color:#222;-webkit-text-stroke:0.12px #222;white-space:nowrap;">210</div><div style="position:absolute;left:199.2px;width:300px;text-align:right;top:385.07px;height:24px;line-height:24px;font-size:12px;color:#222;-webkit-text-stroke:0.12px #222;white-space:nowrap;">212123</div><div style="position:absolute;left:117.4px;top:402.53px;height:24.4px;line-height:24.4px;font-size:12.2px;color:#222;-webkit-text-stroke:0.12px #222;white-space:nowrap;">Март</div><div style="position:absolute;left:-50.5px;width:300px;text-align:right;top:402.72999999999996px;height:24px;line-height:24px;font-size:12px;color:#222;-webkit-text-stroke:0.12px #222;white-space:nowrap;">1200</div><div style="position:absolute;left:40.30000000000001px;width:300px;text-align:right;top:402.72999999999996px;height:24px;line-height:24px;font-size:12px;color:#222;-webkit-text-stroke:0.12px #222;white-space:nowrap;">3220</div><div style="position:absolute;left:114.39999999999998px;width:300px;text-align:right;top:402.72999999999996px;height:24px;line-height:24px;font-size:12px;color:#222;-webkit-text-stroke:0.12px #222;white-space:nowrap;">255</div><div style="position:absolute;left:199.2px;width:300px;text-align:right;top:402.72999999999996px;height:24px;line-height:24px;font-size:12px;color:#222;-webkit-text-stroke:0.12px #222;white-space:nowrap;">235485</div><div style="position:absolute;left:117.4px;top:420.19px;height:24.4px;line-height:24.4px;font-size:12.2px;color:#222;-webkit-text-stroke:0.12px #222;white-space:nowrap;">Апрель</div><div style="position:absolute;left:-50.5px;width:300px;text-align:right;top:420.39px;height:24px;line-height:24px;font-size:12px;color:#222;-webkit-text-stroke:0.12px #222;white-space:nowrap;">1400</div><div style="position:absolute;left:40.30000000000001px;width:300px;text-align:right;top:420.39px;height:24px;line-height:24px;font-size:12px;color:#222;-webkit-text-stroke:0.12px #222;white-space:nowrap;">3672</div><div style="position:absolute;left:114.39999999999998px;width:300px;text-align:right;top:420.39px;height:24px;line-height:24px;font-size:12px;color:#222;-webkit-text-stroke:0.12px #222;white-space:nowrap;">270</div><div style="position:absolute;left:199.2px;width:300px;text-align:right;top:420.39px;height:24px;line-height:24px;font-size:12px;color:#222;-webkit-text-stroke:0.12px #222;white-space:nowrap;">262052</div><div style="position:absolute;left:117.4px;top:437.85px;height:24.4px;line-height:24.4px;font-size:12.2px;color:#222;-webkit-text-stroke:0.12px #222;white-space:nowrap;">Май</div><div style="position:absolute;left:-50.5px;width:300px;text-align:right;top:438.05px;height:24px;line-height:24px;font-size:12px;color:#222;-webkit-text-stroke:0.12px #222;white-space:nowrap;">1350</div><div style="position:absolute;left:40.30000000000001px;width:300px;text-align:right;top:438.05px;height:24px;line-height:24px;font-size:12px;color:#222;-webkit-text-stroke:0.12px #222;white-space:nowrap;">4051</div><div style="position:absolute;left:114.39999999999998px;width:300px;text-align:right;top:438.05px;height:24px;line-height:24px;font-size:12px;color:#222;-webkit-text-stroke:0.12px #222;white-space:nowrap;">288</div><div style="position:absolute;left:199.2px;width:300px;text-align:right;top:438.05px;height:24px;line-height:24px;font-size:12px;color:#222;-webkit-text-stroke:0.12px #222;white-space:nowrap;">369159</div><div style="position:absolute;left:117.4px;top:455.51px;height:24.4px;line-height:24.4px;font-size:12.2px;color:#222;-webkit-text-stroke:0.12px #222;white-space:nowrap;">Июнь</div><div style="position:absolute;left:-50.5px;width:300px;text-align:right;top:455.71px;height:24px;line-height:24px;font-size:12px;color:#222;-webkit-text-stroke:0.12px #222;white-space:nowrap;">1100</div><div style="position:absolute;left:40.30000000000001px;width:300px;text-align:right;top:455.71px;height:24px;line-height:24px;font-size:12px;color:#222;-webkit-text-stroke:0.12px #222;white-space:nowrap;">3456</div><div style="position:absolute;left:114.39999999999998px;width:300px;text-align:right;top:455.71px;height:24px;line-height:24px;font-size:12px;color:#222;-webkit-text-stroke:0.12px #222;white-space:nowrap;">240</div><div style="position:absolute;left:199.2px;width:300px;text-align:right;top:455.71px;height:24px;line-height:24px;font-size:12px;color:#222;-webkit-text-stroke:0.12px #222;white-space:nowrap;">352156</div><div style="position:absolute;left:59px;top:137.83px;height:24px;line-height:24px;font-size:12px;color:#111;white-space:nowrap;font-weight:bold">Год</div><div style="position:absolute;left:101.1px;top:143.7px;width:13px;height:13px;background:#fff;border:1px solid #dedede;box-sizing:border-box"></div><svg style="position:absolute;left:104.6px;top:148.8px;" width="6" height="4" viewBox="0 0 6 4"><path d="M0.2 0.3 H5.8 L3 3.3Z" fill="#707070"/></svg><div style="position:absolute;left:117.3px;top:137.83px;height:24px;line-height:24px;font-size:12px;color:#111;white-space:nowrap;font-weight:bold">Месяц</div><div style="position:absolute;left:171.3px;top:143.7px;width:13px;height:13px;background:#fff;border:1px solid #dedede;box-sizing:border-box"></div><svg style="position:absolute;left:174.8px;top:148.8px;" width="6" height="4" viewBox="0 0 6 4"><path d="M0.2 0.3 H5.8 L3 3.3Z" fill="#707070"/></svg><div style="position:absolute;left:187.5px;top:137.83px;height:24px;line-height:24px;font-size:12px;color:#111;white-space:nowrap;font-weight:bold">Реклама</div><div style="position:absolute;left:238.3px;top:143.7px;width:13px;height:13px;background:#fff;border:1px solid #dedede;box-sizing:border-box"></div><svg style="position:absolute;left:241.8px;top:148.8px;" width="6" height="4" viewBox="0 0 6 4"><path d="M0.2 0.3 H5.8 L3 3.3Z" fill="#707070"/></svg><div style="position:absolute;left:254.5px;top:137.83px;height:24px;line-height:24px;font-size:12px;color:#111;white-space:nowrap;font-weight:bold">Посетителей</div><div style="position:absolute;left:329.1px;top:143.7px;width:13px;height:13px;background:#fff;border:1px solid #dedede;box-sizing:border-box"></div><svg style="position:absolute;left:332.6px;top:148.8px;" width="6" height="4" viewBox="0 0 6 4"><path d="M0.2 0.3 H5.8 L3 3.3Z" fill="#707070"/></svg><div style="position:absolute;left:345.3px;top:137.83px;height:24px;line-height:24px;font-size:12px;color:#111;white-space:nowrap;font-weight:bold">Продаж</div><div style="position:absolute;left:403.2px;top:143.7px;width:13px;height:13px;background:#fff;border:1px solid #dedede;box-sizing:border-box"></div><svg style="position:absolute;left:406.7px;top:148.8px;" width="6" height="4" viewBox="0 0 6 4"><path d="M0.2 0.3 H5.8 L3 3.3Z" fill="#707070"/></svg><div style="position:absolute;left:419.4px;top:137.83px;height:24px;line-height:24px;font-size:12px;color:#111;white-space:nowrap;font-weight:bold">Сумма</div><div style="position:absolute;left:488.0px;top:143.7px;width:13px;height:13px;background:#fff;border:1px solid #dedede;box-sizing:border-box"></div><svg style="position:absolute;left:491.5px;top:148.8px;" width="6" height="4" viewBox="0 0 6 4"><path d="M0.2 0.3 H5.8 L3 3.3Z" fill="#707070"/></svg><div style="position:absolute;left:113.3px;top:175.32px;width:304.09999999999997px;height:72.64px;border:2px solid #567461;box-sizing:border-box"></div><div style="position:absolute;left:113.3px;top:387.24px;width:304.09999999999997px;height:72.64px;border:2px solid #567461;box-sizing:border-box"></div><div style="position:absolute;left:978px;top:123px;width:11px;height:367px;background:#f1f1f1"></div><div style="position:absolute;left:978px;top:123px;width:11px;height:14px;background:#fafafa;border:1px solid #e0e0e0;box-sizing:border-box"></div><svg style="position:absolute;left:979px;top:126px;" width="9" height="8" viewBox="0 0 9 8"><path d="M1.5 5.5 L4.5 2.5 L7.5 5.5Z" fill="#c0c0c0"/></svg><div style="position:absolute;left:978px;top:138px;width:11px;height:283px;background:#f8f8f8;border:1px solid #e4e4e4;box-sizing:border-box"></div><div style="position:absolute;left:978px;top:421px;width:11px;height:47px;background:#e2e2e2"></div><div style="position:absolute;left:981px;top:274.8px;width:4px;height:1px;background:#e2e2e2"></div><div style="position:absolute;left:981px;top:276.9px;width:4px;height:1px;background:#e2e2e2"></div><div style="position:absolute;left:981px;top:279px;width:4px;height:1px;background:#e2e2e2"></div><div style="position:absolute;left:981px;top:281.1px;width:4px;height:1px;background:#e2e2e2"></div><div style="position:absolute;left:981px;top:283.2px;width:4px;height:1px;background:#e2e2e2"></div><div style="position:absolute;left:981px;top:285.3px;width:4px;height:1px;background:#e2e2e2"></div><div style="position:absolute;left:978px;top:467px;width:11px;height:10px;background:#fafafa;border:1px solid #e0e0e0;box-sizing:border-box"></div><svg style="position:absolute;left:979px;top:468px;" width="9" height="8" viewBox="0 0 9 8"><path d="M1.5 2.5 L4.5 5.5 L7.5 2.5Z" fill="#c0c0c0"/></svg><div style="position:absolute;left:31.5px;top:478.5px;width:958px;height:11px;background:#f0f0f0;border-top:1px solid #e4e4e4;box-sizing:border-box"></div><div style="position:absolute;left:33.5px;top:479.5px;width:10px;height:9.5px;background:#fafafa"></div><svg style="position:absolute;left:34px;top:480.5px;" width="9" height="8" viewBox="0 0 9 8"><path d="M5.5 1 L2.5 4 L5.5 7Z" fill="#b8b8b8"/></svg><div style="position:absolute;left:45px;top:479.5px;width:896px;height:9.5px;background:#f4f4f4;border-left:1px solid #e4e4e4;border-right:1px solid #e4e4e4;box-sizing:border-box"></div><div style="position:absolute;left:941px;top:479.5px;width:26px;height:9.5px;background:#e6e6e6"></div><div style="position:absolute;left:967px;top:479.5px;width:10px;height:9.5px;background:#fafafa"></div><svg style="position:absolute;left:968px;top:480.5px;" width="9" height="8" viewBox="0 0 9 8"><path d="M3 1 L6 4 L3 7Z" fill="#b8b8b8"/></svg><div style="position:absolute;left:977px;top:479.5px;width:12px;height:9.5px;background:#e6e6e6"></div><div style="position:absolute;left:930px;top:481.5px;width:1px;height:5px;background:#dedede"></div><div style="position:absolute;left:932.1px;top:481.5px;width:1px;height:5px;background:#dedede"></div><div style="position:absolute;left:934.2px;top:481.5px;width:1px;height:5px;background:#dedede"></div><div style="position:absolute;left:936.3px;top:481.5px;width:1px;height:5px;background:#dedede"></div><div style="position:absolute;left:0px;top:490px;width:1024px;height:22px;background:#f1f1f1;border-top:1px solid #dcdcdc;box-sizing:border-box"></div><div style="position:absolute;left:0px;top:511px;width:1024px;height:1px;background:#333"></div><svg style="position:absolute;left:12px;top:495px;" width="9" height="11" viewBox="0 0 9 11"><path d="M7.5 1 L1.5 5.5 L7.5 10Z" fill="#9a9a9a"/></svg><svg style="position:absolute;left:32px;top:495px;" width="9" height="11" viewBox="0 0 9 11"><path d="M1.5 1 L7.5 5.5 L1.5 10Z" fill="#9a9a9a"/></svg><div style="position:absolute;left:55.5px;top:491px;width:1px;height:19px;background:#dedede"></div><svg style="position:absolute;left:66px;top:495px;" width="12" height="12" viewBox="0 0 12 12"><path d="M6 1 V11 M1 6 H11" stroke="#444" stroke-width="1.3"/></svg><svg style="position:absolute;left:85px;top:495px;" width="12" height="12" viewBox="0 0 12 12"><path d="M1 2 H11 M1 4.7 H11 M1 7.4 H11 M1 10 H11" stroke="#555" stroke-width="1.1"/></svg><div style="position:absolute;left:106px;top:491px;width:1px;height:19px;background:#dedede"></div><div style="position:absolute;left:118px;top:491.8px;height:18.4px;line-height:18.4px;font-size:9.2px;color:#a8a8a8;white-space:nowrap;">Товары с арт</div><div style="position:absolute;left:184.5px;top:491px;width:1px;height:19px;background:#dedede"></div><div style="position:absolute;left:197.8px;top:491.8px;height:18.4px;line-height:18.4px;font-size:9.2px;color:#a8a8a8;white-space:nowrap;">Продажи по мес</div><div style="position:absolute;left:278.4px;top:491px;width:1px;height:19px;background:#dedede"></div><div style="position:absolute;left:279.5px;top:490.5px;width:45px;height:20px;background:#fff"></div><div style="position:absolute;left:279.5px;top:490.5px;width:45px;height:3px;background:#40785c"></div><div style="position:absolute;left:288px;top:492.1px;height:18.8px;line-height:18.8px;font-size:9.4px;color:#444;white-space:nowrap;font-weight:bold">Лист2</div><div style="position:absolute;left:325px;top:491px;width:1px;height:19px;background:#dedede"></div><div style="position:absolute;left:334.5px;top:491.8px;height:18.4px;line-height:18.4px;font-size:9.2px;color:#a8a8a8;white-space:nowrap;">Лист1</div><div style="position:absolute;left:368.7px;top:491px;width:1px;height:19px;background:#dedede"></div><div style="position:absolute;left:381.5px;top:491.8px;height:18.4px;line-height:18.4px;font-size:9.2px;color:#a8a8a8;white-space:nowrap;">сотрудники</div><div style="position:absolute;left:442px;top:491px;width:1px;height:19px;background:#dedede"></div><div style="position:absolute;left:509.5px;top:491px;width:1px;height:19px;background:#dedede"></div><div style="position:absolute;left:521.3px;top:491.8px;height:18.4px;line-height:18.4px;font-size:9.2px;color:#5a5a5a;white-space:nowrap;">Среднее: 1663,6667</div><div style="position:absolute;left:618px;top:491.8px;height:18.4px;line-height:18.4px;font-size:9.2px;color:#5a5a5a;white-space:nowrap;">Количество: 32</div><div style="position:absolute;left:694.7px;top:491.8px;height:18.4px;line-height:18.4px;font-size:9.2px;color:#5a5a5a;white-space:nowrap;">Мин: 210</div><div style="position:absolute;left:744.2px;top:491.8px;height:18.4px;line-height:18.4px;font-size:9.2px;color:#5a5a5a;white-space:nowrap;">Макс: 4051</div><div style="position:absolute;left:802.8px;top:491.8px;height:18.4px;line-height:18.4px;font-size:9.2px;color:#5a5a5a;white-space:nowrap;">Сумма: 39928</div><svg style="position:absolute;left:886px;top:500px;" width="10" height="3" viewBox="0 0 10 3"><path d="M0.5 1.5 H9.5" stroke="#444" stroke-width="1.2"/></svg><div style="position:absolute;left:902px;top:491.7px;height:18.6px;line-height:18.6px;font-size:9.3px;color:#444;white-space:nowrap;font-weight:bold">Масштаб 110%</div><svg style="position:absolute;left:976px;top:496px;" width="11" height="11" viewBox="0 0 11 11"><path d="M5.5 0.5 V10.5 M0.5 5.5 H10.5" stroke="#444" stroke-width="1.2"/></svg><div style="position:absolute;left:197.5px;top:98px;width:143.5px;height:52px;background:#fff;border-radius:2px;box-shadow:0 1px 4px rgba(0,0,0,0.16)"></div><div style="position:absolute;left:215px;top:104.8px;height:18.4px;line-height:18.4px;font-size:9.2px;color:#555;white-space:nowrap;">Задать область печати</div><div style="position:absolute;left:215px;top:126.60000000000001px;height:18.4px;line-height:18.4px;font-size:9.2px;color:#555;white-space:nowrap;">Очистить область печати</div><svg style="position:absolute;left:0px;top:0px;" width="1024" height="512" viewBox="0 0 1024 512"><path d="M491.4 119.9 L276 40.5 M294.5 31.9 L276 40.5 L283.9 58.7" fill="none" stroke="#d61a3b" stroke-width="5.2" stroke-linecap="round" stroke-linejoin="round"/><path d="M21.4 181.1 L197.2 92.1 M175.3 85.6 L197.2 92.1 L188.5 112.1" fill="none" stroke="#d61a3b" stroke-width="5.2" stroke-linecap="round" stroke-linejoin="round"/><path d="M649.3 334.2 L416 248 M433.2 239.7 L416 248 L423.4 266.4" fill="none" stroke="#d61a3b" stroke-width="5.2" stroke-linecap="round" stroke-linejoin="round"/></svg>
</body></html>
